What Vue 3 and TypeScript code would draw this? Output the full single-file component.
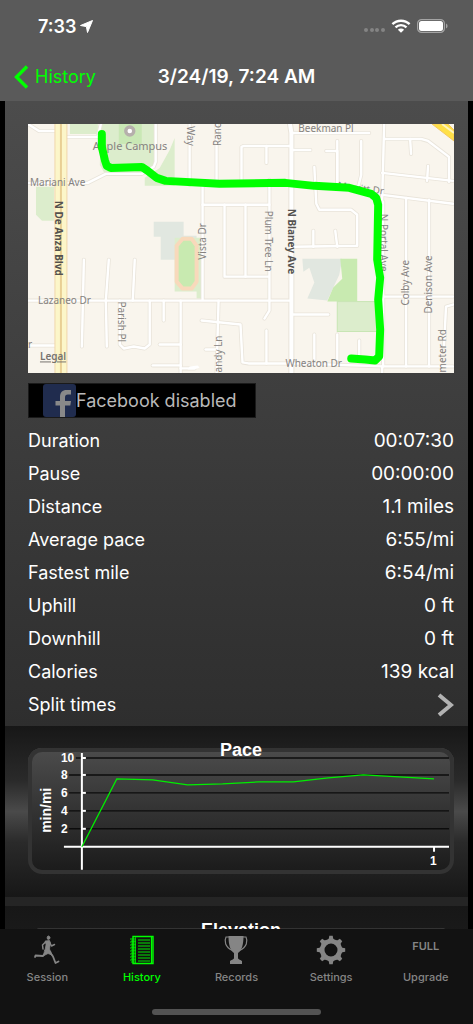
<script setup lang="ts">
interface Stat {
  label: string
  value: string
}

const stats: Stat[] = [
  { label: 'Duration', value: '00:07:30' },
  { label: 'Pause', value: '00:00:00' },
  { label: 'Distance', value: '1.1 miles' },
  { label: 'Average pace', value: '6:55/mi' },
  { label: 'Fastest mile', value: '6:54/mi' },
  { label: 'Uphill', value: '0 ft' },
  { label: 'Downhill', value: '0 ft' },
  { label: 'Calories', value: '139 kcal' },
]

const casedRoads: string[] = [
  'M28 124L39 131H56',
  'M68 137H98L101 124',
  'M28 183H88L106 174H142L154 167L156 162V124',
  'M190 124V185',
  'M217 124V185',
  'M203 185V300',
  'M203 205H270',
  'M225 205V277H269',
  'M246 205V277',
  'M270 180V311L265 319',
  'M242 180V147L244 146H291',
  'M267 146V163',
  'M292 150H311',
  'M294 133H370',
  'M327 151H338V183',
  'M338 141V183',
  'M362 141V175L359 187',
  'M315 167L317 204L320 210H352L358 215V246L295 247',
  'M314 231V247',
  'M336 231L338 247',
  'M385 124L383 200',
  'M385 139H422L429 141L450 157V182',
  'M411 139L412 154',
  'M383 173L454 181',
  'M428 181L429 166',
  'M383 195L454 204',
  'M407 198V367',
  'M430 200V367',
  'M384 202V367',
  'M384 297H454',
  'M28 301H150L215 301H291',
  'M84 260L82 347',
  'M109 260L106 301L107 347',
  'M135 260L133 301',
  'M120 301V345L124 349L134 347L145 349L150 345V301',
  'M164 301V321',
  'M181 301V374',
  'M160 345H181',
  'M153 366H181',
  'M181 369H195',
  'M28 346H64',
  'M219 301L217 374',
  'M202 321L241 325L243 363L249 364H300L384 367H454',
  'M206 350H217',
  'M267 331V364',
  'M294 315H329',
  'M315 335V360',
  'M338 335V360',
  'M360 341V362',
  'M445 347L447 307L454 305',
  'M383 367V374',
]

const tickValues: number[] = [2, 4, 6, 8, 10]
const baseY = 99
const unit = 9
const yFor = (v: number): number => baseY - v * unit + (v > 8 ? 1 : 0)

const paceValues: number[] = [0, 7.6, 7.4, 6.9, 7, 7.2, 7.2, 7.7, 8, 7.8, 7.6]
const pacePoints: string = paceValues
  .map((v, i) => `${Math.round(54 + i * 35.3)},${Math.round(baseY - v * unit)}`)
  .join(' ')

const gearTeeth: number[] = [0, 45, 90, 135, 180, 225, 270, 315]
const notebookLines: number[] = [5, 8, 11, 14, 17, 20, 23, 26]
</script>

<template>
  <div class="app">
    <header class="top">
      <div class="status">
        <div class="clock">
          <span>7:33</span>
          <svg width="13" height="13" viewBox="0 0 13 13" aria-hidden="true">
            <path d="M12.5 0.5L7.5 12.5L6.4 6.6L0.5 5.5Z" fill="#fff" stroke="#fff" stroke-linejoin="round" />
          </svg>
        </div>
        <div class="signals">
          <svg width="23" height="6" viewBox="0 0 23 6" aria-hidden="true">
            <g fill="#848484">
              <circle cx="3" cy="3" r="2" /><circle cx="9" cy="3" r="2" />
              <circle cx="14" cy="3" r="2" /><circle cx="20" cy="3" r="2" />
            </g>
          </svg>
          <svg class="wifi" width="20" height="14" viewBox="0 0 20 14" aria-hidden="true">
            <g fill="none" stroke="#fff" stroke-width="2.4">
              <path d="M1.4 5.2A12.4 12.4 0 0 1 18.6 5.2" />
              <path d="M4.5 8.3A8 8 0 0 1 15.5 8.3" />
            </g>
            <path d="M10 13.8L6.9 10.7A4.4 4.4 0 0 1 13.1 10.7Z" fill="#fff" />
          </svg>
          <svg width="31" height="14" viewBox="0 0 31 14" aria-hidden="true">
            <rect x="0.6" y="0.6" width="26.8" height="12.8" rx="4" fill="none" stroke="#a4a4a4" stroke-width="1.2" />
            <rect x="2" y="2" width="24" height="10" rx="2.5" fill="#fff" />
            <path d="M29 4.6Q30.6 5.4 30.6 7T29 9.4Z" fill="#a4a4a4" />
          </svg>
        </div>
      </div>
      <div class="nav">
        <a class="back" href="#history">
          <svg width="15" height="24" viewBox="0 0 15 24" aria-hidden="true">
            <path d="M13 1.5L2.5 12L13 22.5" fill="none" stroke="#0f0" stroke-width="3.4" />
          </svg>
          <span>History</span>
        </a>
        <h1>3/24/19, 7:24 AM</h1>
      </div>
    </header>

    <main class="content">
      <section class="details">
        <svg class="map" viewBox="28 124 427 250" role="img" aria-label="Route map">
          <rect x="28" y="124" width="427" height="250" fill="#f9f5ed" />
          <path d="M70 124H98V134H70Z" fill="#dcedcc" />
          <path d="M101 124H156V164L146 172H104L100 165Z" fill="#dcedcc" />
          <path d="M175 124V186H145V178L160 168L170 150L175 138Z" fill="#dcedcc" />
          <path d="M119 124H142V144H119Z" fill="#c9e8b5" />
          <path d="M36 187H54V221H42L36 215Z" fill="#dcedcc" />
          <path d="M154 222H184V236H197V260H161V237H154Z" fill="#e1e7e0" />
          <path d="M175 238H203V299H197V292H175Z" fill="#dcedcc" />
          <path d="M183 239H192L197 246V282L192 289H183L177 282V246Z" fill="#c8eab0" stroke="#f8d9bb" stroke-width="4" stroke-linejoin="round" />
          <path d="M303 259H343L340 275L328 301L308 299L315 283L310 268L304 272Z" fill="#e1e7e0" />
          <path d="M341 259H358V302H328L334 288L343 279Z" fill="#c8eab0" />
          <rect x="338" y="302" width="43" height="30" fill="#dcedcc" stroke="#c8e5b4" />

          <g fill="none" stroke-linejoin="round" stroke-linecap="round">
            <path v-for="d in casedRoads" :key="'c' + d" :d="d" stroke="#e9e4da" stroke-width="4" />
            <path d="M290 120L292 133V380" stroke="#e9e4da" stroke-width="6" />
            <path v-for="d in casedRoads" :key="'f' + d" :d="d" stroke="#fff" stroke-width="2.4" />
            <path d="M290 120L292 133V380" stroke="#fff" stroke-width="4" />
          </g>
          <path d="M190 367L198 366L200 368L195 370H188Z" fill="#fff" />

          <path d="M55 124H67V374H55Z" fill="#fcf6c9" />
          <path d="M55 124V374M67 124V374" stroke="#f1d6ab" />
          <path d="M61 124V374" stroke="#e9cf94" stroke-width="2" />
          <path d="M433 124L455 141V130L449 124Z" fill="#ffe047" stroke="#f4c860" />
          <path d="M443 124L455 133" stroke="#fff5bd" stroke-width="2" />

          <g class="street">
            <text x="93" y="150" font-size="11">Apple Campus</text>
            <text x="30" y="186">Mariani Ave</text>
            <text x="299" y="132">Beekman Pl</text>
            <text x="338" y="189" transform="rotate(7 338 189)">Merritt Dr</text>
            <text x="38" y="304">Lazaneo Dr</text>
            <text x="286" y="368">Wheaton Dr</text>
            <text transform="translate(187 126) rotate(90)">Way</text>
            <text transform="translate(221 146) rotate(-90)">Ranc</text>
            <text transform="translate(206 260) rotate(-90)">Vista Dr</text>
            <text transform="translate(266 211) rotate(90)">Plum Tree Ln</text>
            <text transform="translate(381 214) rotate(90)">N Portal Ave</text>
            <text transform="translate(410 306) rotate(-90)">Colby Ave</text>
            <text transform="translate(433 314) rotate(-90)">Denison Ave</text>
            <text transform="translate(447 373) rotate(-90)">meter Rd</text>
            <text transform="translate(118 302) rotate(90)">Parish Pl</text>
            <text transform="translate(222 373) rotate(-90)">andy Ln</text>
            <text x="28" y="349">r</text>
          </g>
          <g class="avenue">
            <text transform="translate(55 201) rotate(90)">N De Anza Blvd</text>
            <text transform="translate(289 209) rotate(90)">N Blaney Ave</text>
          </g>
          <circle cx="130" cy="131" r="4" fill="#fff" stroke="#b6b0ac" stroke-width="3.4" />
          <text class="legal" x="40" y="361">Legal</text>
          <path
            d="M102 134V147L105 160L107 166L111 168L142 167L148 171L157 178L166 181L220 184L286 183L315 186L350 188L372 194L377 198L379 205L378 260L381 278L379 300L381 330L380 357L376 361L366 360L352 359"
            fill="none" stroke="#0f0" stroke-width="8" stroke-linecap="round" stroke-linejoin="round"
          />
        </svg>

        <button class="facebook" type="button">
          <svg width="33" height="33" viewBox="0 0 33 33" aria-hidden="true">
            <rect width="33" height="33" rx="3" fill="#202c4e" />
            <path
              d="M17 33V21.500H12.500V17H17V13C17 8.500 19.500 6 23.500 6H28V10.500H25C22.800 10.500 22 11.500 22 13.500V17H28L27.300 21.500H22V33Z"
              fill="#898989"
            />
          </svg>
          <span>Facebook disabled</span>
        </button>

        <dl class="stats">
          <div v-for="s in stats" :key="s.label" class="row">
            <dt>{{ s.label }}</dt>
            <dd>{{ s.value }}</dd>
          </div>
        </dl>
        <a class="row split" href="#splits">
          <span>Split times</span>
          <svg width="17" height="24" viewBox="0 0 17 24" aria-hidden="true">
            <path d="M2 2L14 12L2 22" fill="none" stroke="#b2b2b2" stroke-width="4" />
          </svg>
        </a>
      </section>

      <section class="graph">
        <div class="plot">
          <h2>Pace</h2>
          <svg viewBox="0 0 427 126" role="img" aria-label="Pace in minutes per mile">
            <path
              v-for="t in tickValues" :key="'g' + t"
              :d="`M${t > 9 ? 48 : 41} ${yFor(t)}H422`" stroke="#0c0c0c" stroke-width="1.4"
            />
            <path
              v-for="t in tickValues" :key="'t' + t"
              :d="`M54 ${yFor(t)}H58`" stroke="#fff" stroke-width="2"
            />
            <path d="M54 5V122M36 99H422M407 99V104" stroke="#fff" stroke-width="2" />
            <g class="axis">
              <text v-for="t in tickValues" :key="'l' + t" x="33" :y="yFor(t) + 4">{{ t }}</text>
              <text x="403" y="117">1</text>
              <text transform="translate(23 85) rotate(-90)" font-size="14">min/mi</text>
            </g>
            <polyline :points="pacePoints" fill="none" stroke="#0e0" stroke-width="1.3" />
          </svg>
        </div>
      </section>

      <section class="graph next">
        <div class="plot">
          <h2>Elevation</h2>
        </div>
      </section>
    </main>

    <footer class="bottom">
      <nav class="tabs" aria-label="Main">
        <a class="tab" href="#session">
          <svg width="30" height="30" viewBox="0 0 30 30" aria-hidden="true">
            <g fill="#858585" stroke="#858585" stroke-linejoin="round" stroke-linecap="round">
              <ellipse cx="16.500" cy="2.800" rx="1.300" ry="1.800" />
              <path d="M13.500 6L17.500 5.500L18.500 8L17.500 14L18.500 17L15 18L13 15.500L14 10Z" stroke-width="0.800" />
              <path d="M14 6.500L10.500 10L11 14M18 8L19.500 11L22.500 9.500" fill="none" stroke-width="1.500" />
              <path d="M14 16.500L11 21L3.500 20.500L3 22" fill="none" stroke-width="1.800" />
              <path d="M17.500 16.500L21 21.500L23.500 28L26.500 26.500" fill="none" stroke-width="1.800" />
              <path d="M13 15L18.500 16L20 20L16 18.500L12 20.500Z" stroke-width="0.800" />
            </g>
          </svg>
          <span>Session</span>
        </a>
        <a class="tab active" href="#history" aria-current="page">
          <svg width="30" height="30" viewBox="0 0 30 30" aria-hidden="true">
            <g fill="none" stroke="#0f0">
              <path d="M6 1.500H26V28.500H6Z" stroke-width="1.400" />
              <path d="M24.500 1V29" stroke-width="1.300" />
              <path d="M8.500 2V28" stroke-width="0.600" />
              <path
                v-for="y in notebookLines" :key="y"
                :d="`M11 ${y}H23M3 ${y - 1}H9M4 ${y + 1}H9`" stroke-width="0.900"
              />
            </g>
          </svg>
          <span>History</span>
        </a>
        <a class="tab" href="#records">
          <svg width="30" height="30" viewBox="0 0 30 30" aria-hidden="true">
            <path
              d="M7.500 1H22.500C22.500 10 20.500 16 17 18V23C17 24.500 20 25 21 26V29H9V26C10 25 13 24.500 13 23V18C9.500 16 7.500 10 7.500 1Z"
              fill="#858585"
            />
            <path d="M8 2H5C3 6 4 12 11.500 15.500M22 2H25C27 6 26 12 18.500 15.500" fill="none" stroke="#858585" stroke-width="1.200" />
          </svg>
          <span>Records</span>
        </a>
        <a class="tab" href="#settings">
          <svg width="30" height="30" viewBox="0 0 30 30" aria-hidden="true">
            <circle cx="15" cy="15" r="8.800" fill="none" stroke="#858585" stroke-width="4.600" />
            <path
              v-for="a in gearTeeth" :key="a" d="M11 5.500L12.800 3.500L13.300 0.800H16.700L17.200 3.500L19 5.500Z"
              :transform="`rotate(${a} 15 15)`" fill="#858585"
            />
          </svg>
          <span>Settings</span>
        </a>
        <a class="tab" href="#upgrade">
          <strong>FULL</strong>
          <span>Upgrade</span>
        </a>
      </nav>
      <div class="home"></div>
    </footer>
  </div>
</template>

<style>
body {
  margin: 0;
  background: #000;
}
</style>

<style scoped>
.app {
  display: flex;
  flex-direction: column;
  height: 100vh;
  background: #000;
  color: #fff;
  font-family: Inter, "Liberation Sans", sans-serif;
}

a {
  color: inherit;
  text-decoration: none;
}

svg {
  display: block;
  flex: none;
}

.top {
  flex: none;
  background: #5a5a5a;
}

.status {
  display: flex;
  align-items: center;
  justify-content: space-between;
  height: 52px;
  padding: 0 25px 0 38px;
}

.clock {
  display: flex;
  align-items: center;
  gap: 4px;
  font-size: 18px;
  font-weight: 600;
}

.signals {
  display: flex;
  align-items: flex-end;
  gap: 5px;
}

.wifi {
  margin-right: 1px;
}

.nav {
  display: grid;
  grid-template-columns: 1fr auto 1fr;
  align-items: center;
  height: 49px;
  padding: 0 14px;
}

.back {
  display: flex;
  align-items: center;
  gap: 6px;
  color: #0f0;
  font-size: 18px;
}

h1 {
  margin: 0;
  font-size: 19px;
  font-weight: 600;
}

.content {
  flex: 1;
  min-height: 0;
  margin: 0 5px;
  overflow: hidden auto;
  scrollbar-width: none;
}

.details {
  padding: 23px 14px 5px 23px;
  background: linear-gradient(#4c4c4c, #2e2e2e);
}

.map {
  width: 100%;
  height: auto;
}

.street {
  font-family: "Noto Sans", sans-serif;
  font-size: 10px;
  fill: #85827f;
}

.avenue {
  font-family: "Noto Sans", sans-serif;
  font-size: 10px;
  font-weight: 700;
  fill: #55524f;
}

.legal {
  font-family: "Noto Sans", sans-serif;
  font-size: 10px;
  font-weight: 600;
  fill: #77736f;
  text-decoration: underline;
}

.facebook {
  display: flex;
  align-items: center;
  height: 35px;
  margin: 10px 0 6px;
  padding: 0 18px 0 14px;
  border: 1px solid #1a1a1a;
  background: #000;
  color: #b9b9b9;
  font-family: inherit;
  font-size: 18px;
}

.stats {
  margin: 0;
}

.row {
  display: flex;
  align-items: center;
  justify-content: space-between;
  height: 33px;
  font-size: 18px;
}

.row dd {
  margin: 0;
  font-size: 19px;
}

.graph {
  padding: 22px 14px 23px 23px;
  border-bottom: 9px solid #252525;
  background: linear-gradient(#171717, #2a2a2a 32%, #4a4a4a 50%, #2a2a2a 68%, #171717);
}

.plot {
  position: relative;
  border-radius: 14px;
  background: linear-gradient(#4c4c4c, #1a1a1a);
  box-shadow: inset 0 0 0 4px #333;
}

.plot svg {
  width: 100%;
  height: auto;
}

h2 {
  position: absolute;
  top: -8px;
  right: 0;
  left: 0;
  margin: 0;
  font-family: "Liberation Sans", sans-serif;
  font-size: 18px;
  font-weight: 700;
  line-height: 20px;
  text-align: center;
}

.axis {
  font-family: "Liberation Sans", sans-serif;
  font-size: 12px;
  font-weight: 700;
  fill: #fff;
}

.next {
  background: linear-gradient(#171717, #2a2a2a);
}

.next .plot {
  height: 126px;
}

.bottom {
  flex: none;
  padding-bottom: 9px;
  background: #121212;
}

.tabs {
  display: grid;
  grid-template-columns: repeat(5, 1fr);
  height: 80px;
}

.tab {
  display: flex;
  flex-direction: column;
  align-items: center;
  gap: 4px;
  padding-top: 6px;
  color: #858585;
  font-size: 11px;
  font-weight: 500;
  line-height: 16px;
}

.tab strong {
  height: 30px;
  font-size: 11px;
  font-weight: 600;
  line-height: 22px;
}

.active {
  color: #0f0;
}

.home {
  width: 169px;
  height: 6px;
  margin: 0 auto;
  border-radius: 3px;
  background: #535353;
}
</style>
